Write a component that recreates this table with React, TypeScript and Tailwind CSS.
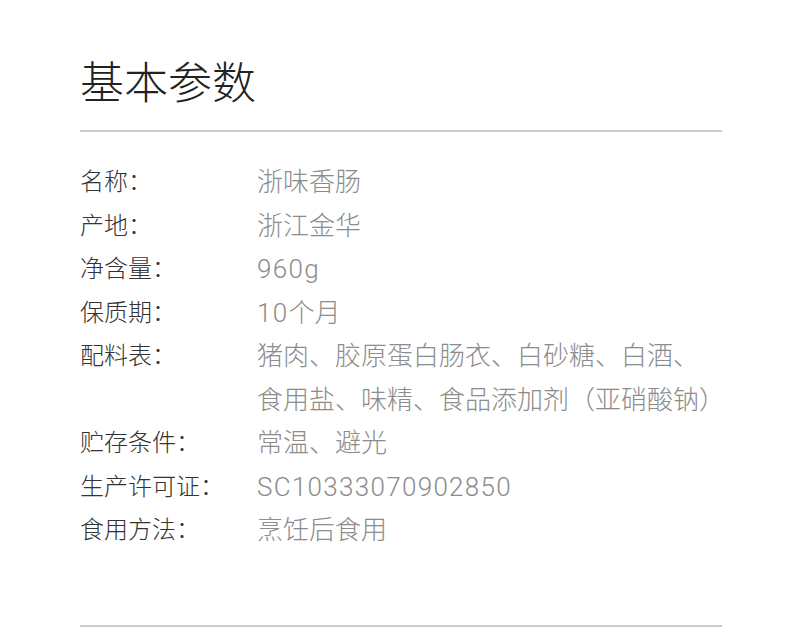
const rows: { label: string; value: React.ReactNode }[] = [
  { label: "名称：", value: "浙味香肠" },
  { label: "产地：", value: "浙江金华" },
  { label: "净含量：", value: <span className="tracking-[1.3px]">960g</span> },
  {
    label: "保质期：",
    value: (
      <>
        <span className="tracking-[1.3px]">10</span>个月
      </>
    ),
  },
  {
    label: "配料表：",
    value: (
      <>
        猪肉、胶原蛋白肠衣、白砂糖、白酒、
        <br />
        食用盐、味精、食品添加剂（亚硝酸钠）
      </>
    ),
  },
  { label: "贮存条件：", value: "常温、避光" },
  {
    label: "生产许可证：",
    value: <span className="tracking-[1.3px]">SC10333070902850</span>,
  },
  { label: "食用方法：", value: "烹饪后食用" },
];

export default function App() {
  return (
    <div className="h-[630px] w-[790px] overflow-hidden bg-white font-['Roboto','Noto_Sans_CJK_SC',sans-serif]">
      <div className="ml-[80px] w-[642px] pt-[62px]">
        <h1 className="text-[44px] font-light leading-[44px] text-[#222]">基本参数</h1>
        <div className="mt-[24px] h-[2px] bg-[#cccccc]" />

        <div className="mt-[29px] flex flex-col">
          {rows.map((row) => (
            <div key={row.label} className="flex leading-[43.5px]">
              <div className="w-[177px] shrink-0 text-[24px] font-light text-[#333]">
                {row.label}
              </div>
              <div className="text-[26px] font-light text-[#8c8c8c]">{row.value}</div>
            </div>
          ))}
        </div>

        <div className="mt-[72px] h-[2px] bg-[#cccccc]" />
      </div>
    </div>
  );
}
